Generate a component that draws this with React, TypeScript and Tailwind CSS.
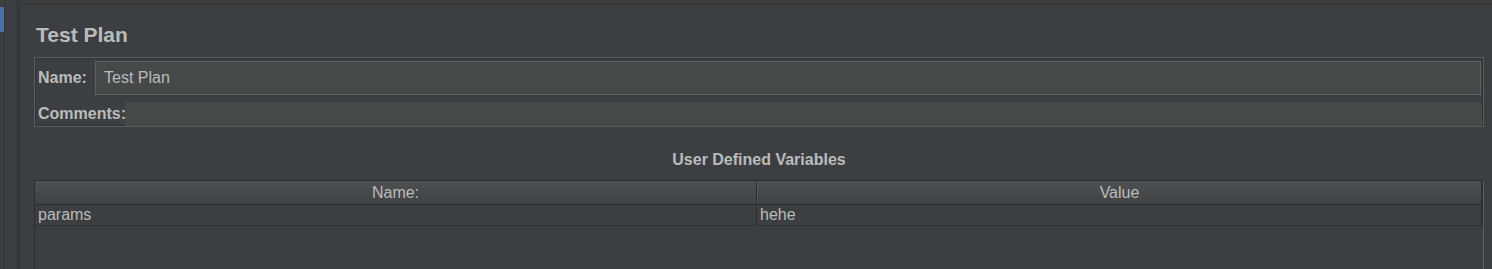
const rows = [{ name: "params", value: "hehe" }];

export default function App() {
  return (
    <div className="w-[1492px] h-[269px] bg-[#3c3f41] flex overflow-hidden font-['Liberation_Sans',Arial,sans-serif] text-[#bbbbbb]">
      {/* Left tree strip */}
      <div className="w-[19px] shrink-0 flex">
        <div className="w-[4px] shrink-0">
          <div className="mt-[7px] h-[25px] bg-[#4b6eaf]" />
        </div>
        <div className="w-[12px] border-l border-[#333537] bg-[#3c3f41]" />
        <div className="w-[3px] bg-[#35383a]" />
      </div>

      {/* Main panel */}
      <div className="flex-1 flex flex-col">
        <div className="h-[4px] shrink-0 bg-[#393b3d]" />
        <div className="flex-1 border-t border-l border-[#2f3133] pl-[14px] pr-[8px]">
          <h1 className="mt-[18px] pl-[2px] h-[24px] leading-[24px] text-[21px] font-bold">Test Plan</h1>

          {/* Name / Comments box */}
          <div className="mt-[10px] border border-[#5a5d5f] shadow-[inset_0_0_0_1px_#323436] pt-[3px] pr-[2px]">
            <div className="flex items-center h-[34px]">
              <span className="w-[60px] shrink-0 pl-[3px] text-[16px] font-bold">Name:</span>
              <div className="flex-1 h-[34px] bg-[#45494a] border border-[#5e6163] flex items-center pl-[8px] text-[16px]">
                Test Plan
              </div>
            </div>
            <div className="flex items-center h-[24px] mt-[7px]">
              <span className="w-[90px] shrink-0 pl-[3px] text-[16px] font-bold">Comments:</span>
              <div className="flex-1 h-[24px] bg-[#45494a] -mr-[1px]" />
            </div>
          </div>

          {/* User Defined Variables */}
          <div className="mt-[23px] h-[20px] leading-[20px] text-center text-[16px] font-bold">
            User Defined Variables
          </div>

          <div className="mt-[10px] h-[120px] border-l border-t border-[#2b2d2e] border-r border-r-[#5c5f61] flex flex-col">
            <div className="flex h-[24px] border-b border-[#2b2d2e] bg-gradient-to-b from-[#4d5154] to-[#3f4244] text-[16px]">
              <div className="w-[722px] flex items-center justify-center border-r border-[#2b2d2e]">Name:</div>
              <div className="w-[1px] bg-[#55585a]" />
              <div className="flex-1 flex items-center justify-center border-r-2 border-[#2e3032]">Value</div>
            </div>
            {rows.map((r) => (
              <div key={r.name} className="flex h-[21px] border-b border-[#2f3133] text-[16px]">
                <div className="w-[722px] pl-[3px] flex items-center border-r border-[#2b2d2e]">{r.name}</div>
                <div className="w-[1px]" />
                <div className="flex-1 pl-[2px] flex items-center border-r-2 border-[#2e3032]">{r.value}</div>
              </div>
            ))}
          </div>
        </div>
      </div>
    </div>
  );
}
